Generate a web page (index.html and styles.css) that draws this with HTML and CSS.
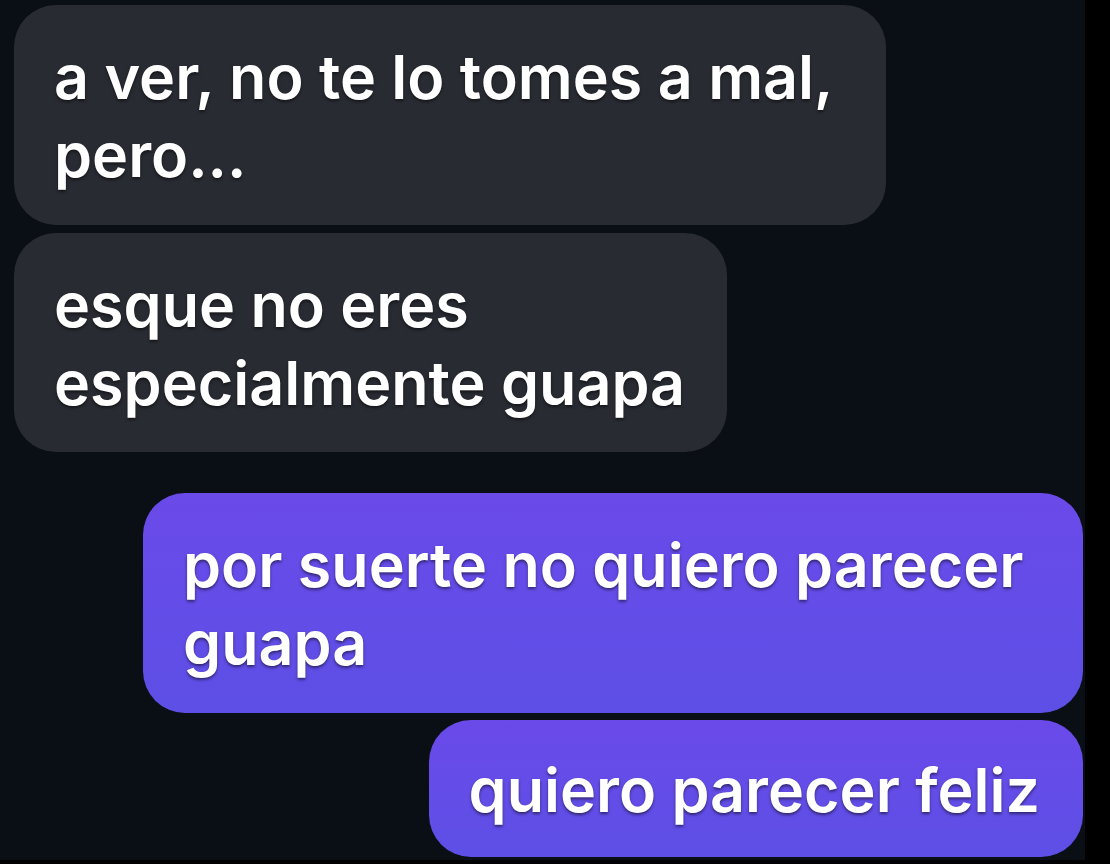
FILE: index.html
```html
<!DOCTYPE html>
<html lang="es">
<head>
<meta charset="utf-8">
<title>Chat</title>
<link rel="stylesheet" href="styles.css">
</head>
<body>
<main class="chat">
  <div class="bubble in b1">a ver, no te lo tomes a mal, pero...</div>
  <div class="bubble in b2">esque no eres especialmente guapa</div>
  <div class="bubble out b3">por suerte no quiero parecer guapa</div>
  <div class="bubble out b4">quiero parecer feliz</div>
</main>
</body>
</html>
```
FILE: styles.css
```css
html, body {
  margin: 0;
  padding: 0;
  background: #000;
  height: 100%;
}
.chat {
  width: 1085px;
  height: 860px;
  background: #0a0e15;
  box-sizing: border-box;
  padding: 5px 2px 0 14px;
  display: flex;
  flex-direction: column;
  overflow: hidden;
  font-family: Inter, "Liberation Sans", sans-serif;
  font-weight: 600;
  font-size: 61px;
  letter-spacing: 0;
  line-height: 78px;
  color: #fff;
}
.bubble {
  box-sizing: border-box;
  border-radius: 42px;
  padding: 33px 40px 0;
  text-shadow: 0 2px 3px rgba(0,0,0,0.5);
}
.in {
  background: #282b32;
  align-self: flex-start;
}
.out {
  background: linear-gradient(180deg, #6a4ae9 0%, #5d4fe6 100%);
  align-self: flex-end;
}
.b1 { width: 872px; height: 220px; }
.b2 { width: 713px; height: 219px; margin-top: 8px; }
.b3 { width: 940px; height: 220px; margin-top: 41px; }
.b4 { height: 137px; margin-top: 7px; padding-top: 31px; padding-right: 43px; white-space: nowrap; }
```
